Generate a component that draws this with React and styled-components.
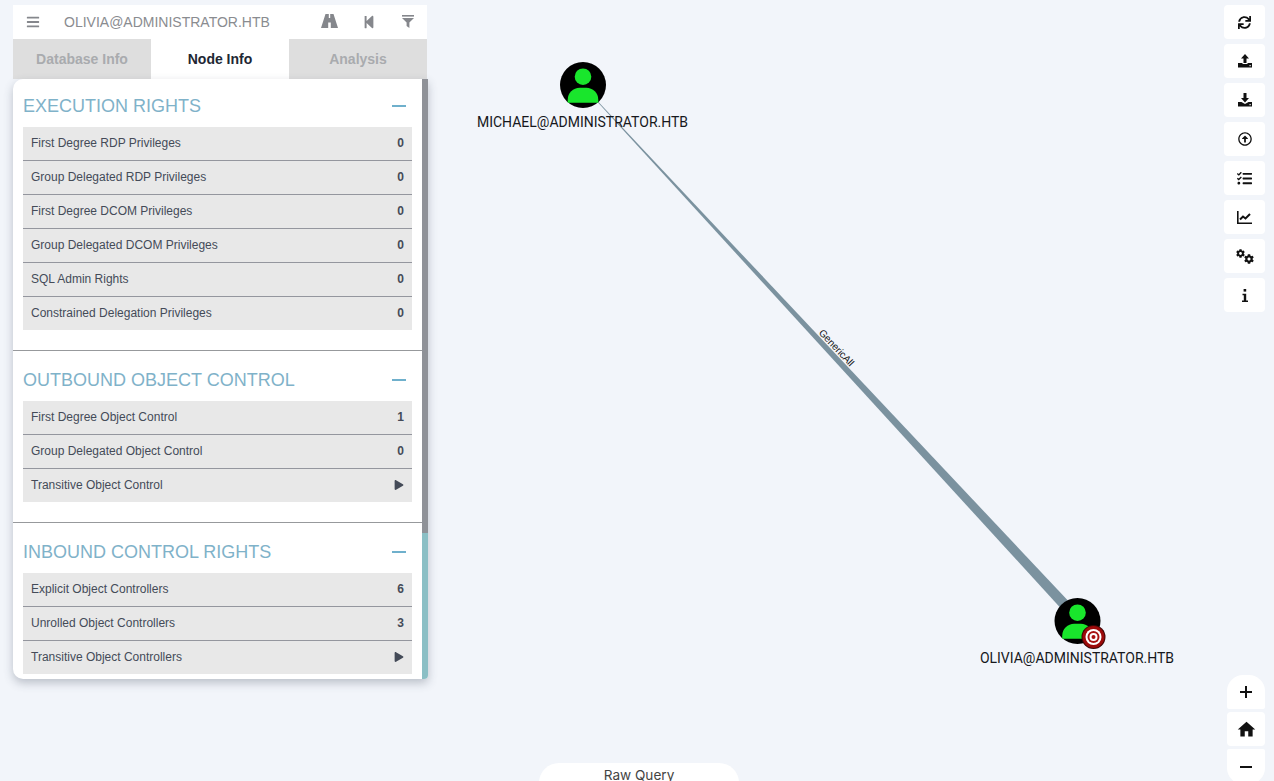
import React from 'react';
import styled, { createGlobalStyle } from 'styled-components';
import { FaBars, FaStepBackward, FaSync, FaRegArrowAltCircleUp, FaTasks, FaCog, FaPlay } from 'react-icons/fa';
import { MdHome } from 'react-icons/md';

const GlobalStyle = createGlobalStyle`
  html, body {
    margin: 0;
    height: 100%;
    overflow: hidden;
    background: #f2f5fa;
  }
  #root { height: 100%; }
`;

const Page = styled.div`
  position: relative;
  width: 1274px;
  height: 781px;
  overflow: hidden;
  background: #f2f5fa;
  font-family: "Liberation Sans", Arial, sans-serif;
`;

const Panel = styled.div`
  position: absolute;
  left: 13px;
  top: 5px;
  width: 415px;
  display: flex;
  flex-direction: column;
`;

const Header = styled.div`
  display: flex;
  align-items: center;
  width: 414px;
  height: 34px;
  background: #fff;
  color: #85878c;
`;

const HeaderIcon = styled.div`
  width: 39px;
  height: 34px;
  display: flex;
  align-items: center;
  justify-content: center;
  flex: none;
  font-size: ${(p) => p.size || 14}px;
  svg {
    margin-bottom: ${(p) => p.lift || 0}px;
  }
`;

const HeaderTitle = styled.div`
  flex: 1;
  margin-left: 12px;
  font-size: 14px;
  color: #8a8c90;
`;

const Tabs = styled.div`
  display: flex;
  width: 414px;
  height: 40px;
`;

const Tab = styled.div`
  flex: 1;
  display: flex;
  align-items: center;
  justify-content: center;
  font-size: 14px;
  font-weight: bold;
  background: ${(p) => (p.active ? '#fff' : '#dedede')};
  color: ${(p) => (p.active ? '#212733' : '#a9abae')};
`;

const Body = styled.div`
  display: flex;
  height: 600px;
  overflow: hidden;
  background: #fff;
  border-radius: 10px 0 4px 10px;
  box-shadow: 0 4px 10px rgba(60, 70, 90, 0.3);
`;

const Content = styled.div`
  flex: 1;
  min-width: 0;
`;

const Scrollbar = styled.div`
  width: 6px;
  flex: none;
  background: #8bbfc5;
`;

const ScrollThumb = styled.div`
  height: ${(p) => p.height}px;
  background: #8f9298;
`;

const Section = styled.div`
  padding: ${(p) => (p.first ? 16 : 18)}px 10px 20px;
  border-bottom: ${(p) => (p.last ? 'none' : '1px solid #97999c')};
`;

const SectionHead = styled.div`
  display: flex;
  align-items: center;
  justify-content: space-between;
  height: 22px;
  margin-bottom: 10px;
`;

const SectionTitle = styled.div`
  font-size: 18px;
  color: #7fb2c9;
`;

const Collapse = styled.div`
  width: 14px;
  height: 2px;
  margin-right: 6px;
  background: #6fb0cc;
`;

const Row = styled.div`
  display: flex;
  align-items: center;
  justify-content: space-between;
  height: 31px;
  padding: 0 8px 2px;
  background: #e8e8e8;
  font-size: 12px;
  color: #444b58;
  border-bottom: 1px solid #94969e;
  &:last-child {
    border-bottom: none;
  }
`;

const RowValue = styled.span`
  font-weight: bold;
  display: flex;
  align-items: center;
`;

const Toolbar = styled.div`
  position: absolute;
  left: 1224px;
  top: 5px;
  display: flex;
  flex-direction: column;
  gap: 5px;
`;

const ToolButton = styled.div`
  width: 41px;
  height: 34px;
  display: flex;
  align-items: center;
  justify-content: center;
  background: #fff;
  border-radius: 4px;
  color: #111;
  font-size: ${(p) => p.size || 14}px;
`;

const CogPair = styled.div`
  display: flex;
  width: 18px;
  height: 15px;
  font-size: 10px;
  svg:first-child {
    align-self: flex-start;
    width: 9px;
    height: 9px;
  }
  svg:last-child {
    align-self: flex-end;
    margin-left: -1px;
  }
`;

const ZoomBar = styled.div`
  position: absolute;
  left: 1227px;
  top: 675px;
  display: flex;
  flex-direction: column;
  gap: 3px;
`;

const ZoomButton = styled.div`
  width: 38px;
  height: ${(p) => (p.pos === 'bottom' ? 35 : 34)}px;
  display: flex;
  align-items: center;
  justify-content: center;
  background: #fff;
  color: #111;
  border-radius: ${(p) =>
    p.pos === 'top' ? '16px 16px 2px 2px' : p.pos === 'bottom' ? '2px 2px 16px 16px' : '4px'};
`;

const RawQuery = styled.div`
  position: absolute;
  left: 539px;
  top: 763px;
  width: 200px;
  height: 40px;
  padding-top: 4px;
  box-sizing: border-box;
  text-align: center;
  background: #fff;
  border-radius: 20px 20px 0 0;
  font-family: Inter, sans-serif;
  font-size: 13.6px;
  color: #444;
`;

const Graph = styled.svg`
  position: absolute;
  left: 0;
  top: 0;
`;

const NodeLabel = styled.text`
  font-family: Roboto, sans-serif;
  font-size: 14px;
  fill: #16181c;
  text-anchor: middle;
`;

const EdgeLabel = styled.text`
  font-family: "Liberation Sans", Arial, sans-serif;
  font-size: 10px;
  fill: #111;
  text-anchor: middle;
`;

const sections = [
  {
    title: 'EXECUTION RIGHTS',
    rows: [
      ['First Degree RDP Privileges', 0],
      ['Group Delegated RDP Privileges', 0],
      ['First Degree DCOM Privileges', 0],
      ['Group Delegated DCOM Privileges', 0],
      ['SQL Admin Rights', 0],
      ['Constrained Delegation Privileges', 0],
    ],
  },
  {
    title: 'OUTBOUND OBJECT CONTROL',
    rows: [
      ['First Degree Object Control', 1],
      ['Group Delegated Object Control', 0],
      ['Transitive Object Control', null],
    ],
  },
  {
    title: 'INBOUND CONTROL RIGHTS',
    rows: [
      ['Explicit Object Controllers', 6],
      ['Unrolled Object Controllers', 3],
      ['Transitive Object Controllers', null],
    ],
  },
];

function RoadIcon() {
  return (
    <svg width="17" height="14" viewBox="0 0 17 14" fill="currentColor">
      <path
        fillRule="evenodd"
        d="M4.5 0H12.5L17 14H0ZM7.8 0V4H9.2V0ZM7.2 8.5V14H9.8V8.5Z"
      />
    </svg>
  );
}

function FunnelIcon() {
  return (
    <svg width="12" height="13" viewBox="0 0 12 13" fill="currentColor">
      <rect x="0" y="0" width="12" height="1.6" />
      <path d="M0 3h12L7.4 7.6V13L4.6 11V7.6z" />
    </svg>
  );
}

function UploadIcon() {
  return (
    <svg width="14" height="14" viewBox="0 0 14 14" fill="currentColor">
      <path d="M7 0L11 4.5H8.5V9H5.5V4.5H3Z" />
      <path
        fillRule="evenodd"
        d="M0 9H4.5V10H9.5V9H14V13.5H0ZM11.5 11V12.2H12.7V11Z"
      />
    </svg>
  );
}

function DownloadIcon() {
  return (
    <svg width="14" height="14" viewBox="0 0 14 14" fill="currentColor">
      <path d="M5.5 0H8.5V5H11L7 9.5L3 5H5.5Z" />
      <path
        fillRule="evenodd"
        d="M0 9H3.5L7 11L10.5 9H14V13.5H0ZM11.5 11V12.2H12.7V11Z"
      />
    </svg>
  );
}

function ChartIcon() {
  return (
    <svg width="15" height="13" viewBox="0 0 15 13" fill="none" stroke="currentColor">
      <path d="M0.8 0V12.2H15" strokeWidth="1.6" />
      <path d="M3 8.5L6 5.5L8.5 7.5L13 3" strokeWidth="2" />
    </svg>
  );
}

function InfoIcon() {
  return (
    <svg width="6" height="13" viewBox="0 0 6 13" fill="currentColor">
      <rect x="1.6" y="0" width="2.6" height="2.6" />
      <path d="M0.5 4.8H4.2V11.6H6V13H0V11.6H1.8V6.2H0.5Z" />
    </svg>
  );
}

function PlusIcon() {
  return (
    <svg width="12" height="12" viewBox="0 0 12 12" fill="currentColor">
      <path d="M5 0H7V5H12V7H7V12H5V7H0V5H5Z" />
    </svg>
  );
}

function MinusIcon() {
  return (
    <svg width="12" height="2" viewBox="0 0 12 2" fill="currentColor">
      <rect width="12" height="2" />
    </svg>
  );
}

function UserNode({ x, y, label }) {
  return (
    <g>
      <circle cx={x} cy={y} r="23" fill="#000" />
      <circle cx={x} cy={y - 8.3} r="8.3" fill="#19e62c" />
      <path
        d={`M${x - 15.3} ${y + 17.7} v-3 a12 12 0 0 1 12 -12 h6.6 a12 12 0 0 1 12 12 v3 z`}
        fill="#19e62c"
      />
      <NodeLabel x={x - 0.5} y={y + 42}>{label}</NodeLabel>
    </g>
  );
}

function TargetBadge({ x, y }) {
  return (
    <g>
      <circle cx={x} cy={y} r="12" fill="#3a0505" />
      <circle cx={x} cy={y} r="11" fill="#9c0a0a" />
      <circle cx={x} cy={y} r="8" fill="#fff" />
      <circle cx={x} cy={y} r="6" fill="#a81212" />
      <circle cx={x} cy={y} r="4" fill="#fff" />
      <circle cx={x} cy={y} r="2" fill="#a81212" />
    </g>
  );
}

export default function App() {
  return (
    <Page>
      <GlobalStyle />
      <Graph width="1274" height="781">
        <polygon points="597.5,102 598,101.6 1074,607 1066,614" fill="#7b929f" />
        <EdgeLabel x="0" y="0" transform="translate(834 350) rotate(47)">GenericAll</EdgeLabel>
        <UserNode x={583} y={85} label="MICHAEL@ADMINISTRATOR.HTB" />
        <UserNode x={1077.5} y={621} label="OLIVIA@ADMINISTRATOR.HTB" />
        <TargetBadge x={1093.5} y={637} />
      </Graph>

      <Panel>
        <Header>
          <HeaderIcon size={14}><FaBars /></HeaderIcon>
          <HeaderTitle>OLIVIA@ADMINISTRATOR.HTB</HeaderTitle>
          <HeaderIcon lift={2}><RoadIcon /></HeaderIcon>
          <HeaderIcon size={14}><FaStepBackward /></HeaderIcon>
          <HeaderIcon lift={2}><FunnelIcon /></HeaderIcon>
        </Header>
        <Tabs>
          <Tab>Database Info</Tab>
          <Tab active>Node Info</Tab>
          <Tab>Analysis</Tab>
        </Tabs>
        <Body>
          <Content>
            {sections.map((section, i) => (
              <Section key={section.title} first={i === 0} last={i === sections.length - 1}>
                <SectionHead>
                  <SectionTitle>{section.title}</SectionTitle>
                  <Collapse />
                </SectionHead>
                {section.rows.map(([name, value]) => (
                  <Row key={name}>
                    <span>{name}</span>
                    <RowValue>{value === null ? <FaPlay size={10} /> : value}</RowValue>
                  </Row>
                ))}
              </Section>
            ))}
          </Content>
          <Scrollbar>
            <ScrollThumb height={454} />
          </Scrollbar>
        </Body>
      </Panel>

      <Toolbar>
        <ToolButton size={13}><FaSync /></ToolButton>
        <ToolButton><UploadIcon /></ToolButton>
        <ToolButton><DownloadIcon /></ToolButton>
        <ToolButton size={14}><FaRegArrowAltCircleUp /></ToolButton>
        <ToolButton size={15}><FaTasks /></ToolButton>
        <ToolButton><ChartIcon /></ToolButton>
        <ToolButton>
          <CogPair><FaCog /><FaCog /></CogPair>
        </ToolButton>
        <ToolButton><InfoIcon /></ToolButton>
      </Toolbar>

      <ZoomBar>
        <ZoomButton pos="top"><PlusIcon /></ZoomButton>
        <ZoomButton><MdHome size={21} /></ZoomButton>
        <ZoomButton pos="bottom"><MinusIcon /></ZoomButton>
      </ZoomBar>

      <RawQuery>Raw Query</RawQuery>
    </Page>
  );
}
